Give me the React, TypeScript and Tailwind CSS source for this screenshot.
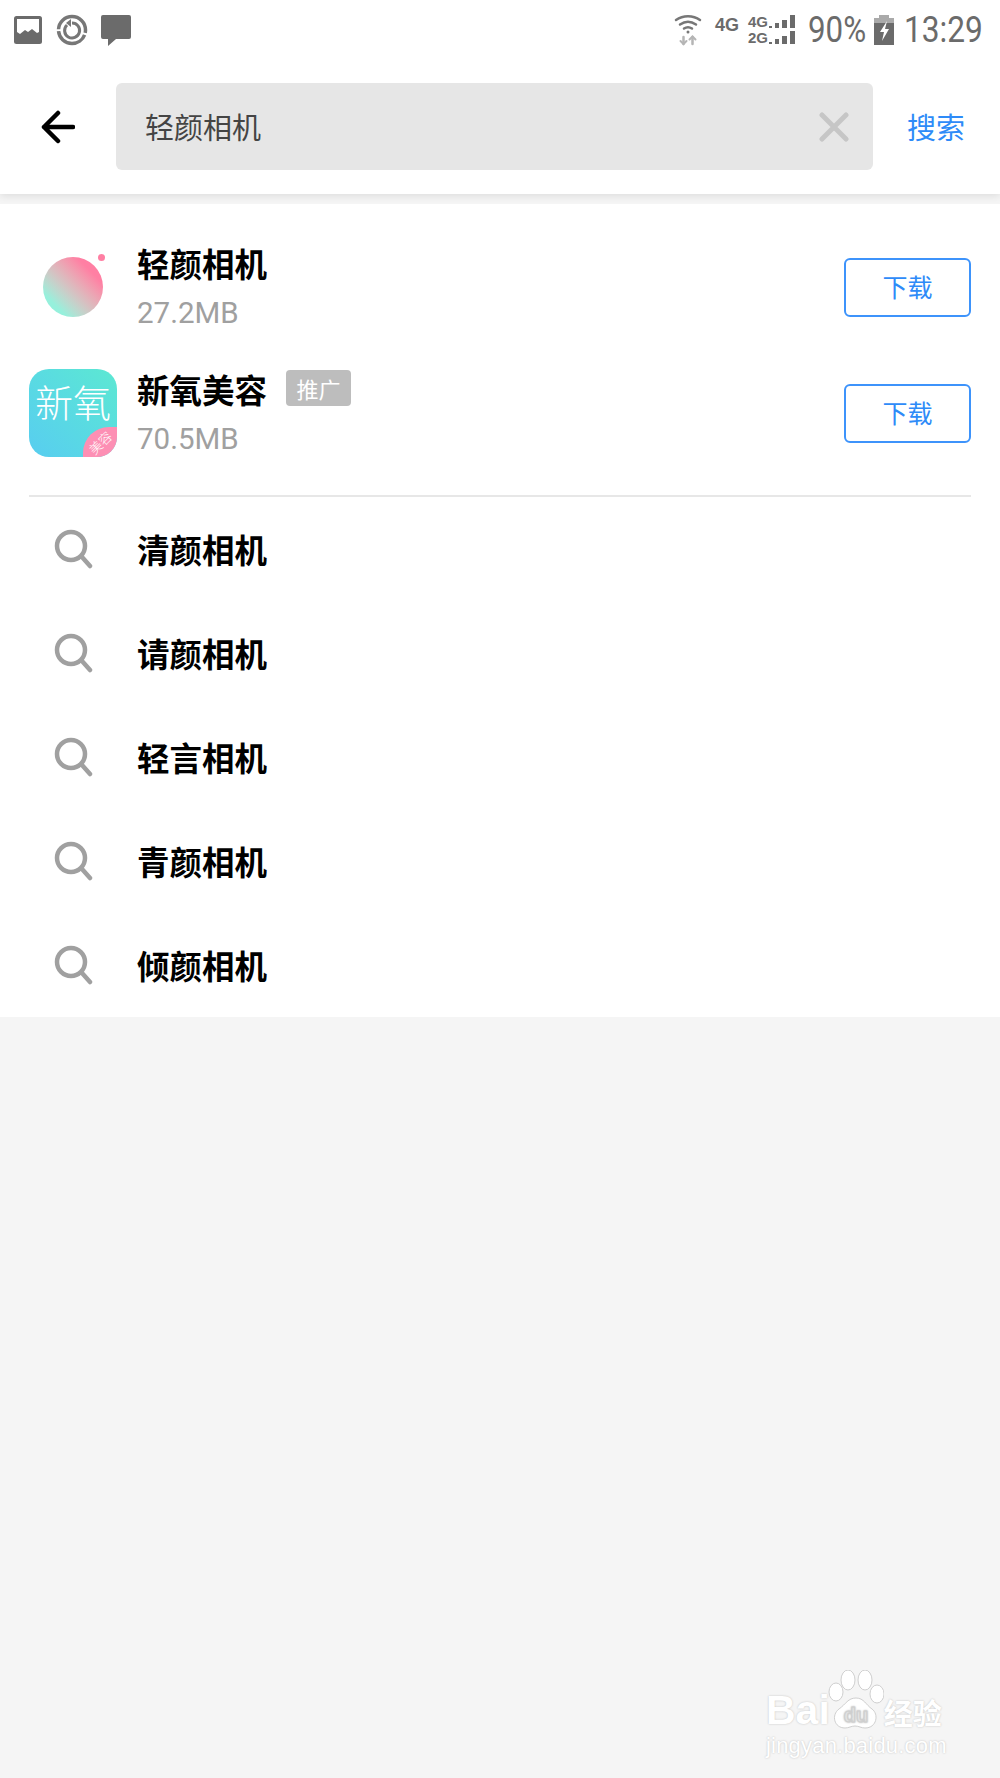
import { Fragment } from 'react'

const suggestions = ['清颜相机', '请颜相机', '轻言相机', '青颜相机', '倾颜相机']

const SearchIcon = () => (
  <svg width="40" height="40" viewBox="0 0 40 40" fill="none" stroke="#a0a0a0" strokeWidth="4.500" strokeLinecap="round">
    <circle cx="18" cy="17" r="14" />
    <path d="M29 28l8 9" />
  </svg>
)

const StatusLeft = () => (
  <div className="flex items-center">
    <svg width="28" height="28" viewBox="0 0 28 28" className="ml-[14px]">
      <rect width="28" height="28" rx="2.500" fill="#6b6b6b" />
      <path d="M3 3h22v13l-2 1-5-4-4 3-3-2-5 4-3-2z" fill="#fff" />
    </svg>
    <svg width="32" height="32" viewBox="0 0 32 32" fill="none" stroke="#777" className="ml-[14px]">
      <path d="M16 2.500a13.500 13.500 0 1 1-13.500 13.500 13.500 13.500 0 0 1 13.500-13.500" strokeWidth="3.500" strokeDasharray="24 2 36 2 30" />
      <path d="M11 11a7.500 7.500 0 1 0 5-2" strokeWidth="3" />
      <path d="M15 5v8l-5-4z" fill="#777" stroke="none" />
    </svg>
    <svg width="32" height="32" viewBox="0 0 32 32" className="ml-[12px]">
      <path d="M3 1h26a2 2 0 0 1 2 2v20a2 2 0 0 1-2 2H16l-8 7 0-7H3a2 2 0 0 1-2-2V3a2 2 0 0 1 2-2z" fill="#6b6b6b" />
    </svg>
  </div>
)

const SignalBars = () => (
  <svg width="26" height="13" viewBox="0 0 26 13" fill="#6b6b6b">
    <rect x="0" y="11" width="3" height="2" />
    <rect x="6" y="8" width="4" height="5" />
    <rect x="13" y="5" width="5" height="8" />
    <rect x="21" y="0" width="5" height="13" />
  </svg>
)

const StatusRight = () => (
  <div className="flex items-center text-[#6b6b6b] [font-family:'Roboto',sans-serif]">
    <svg width="28" height="32" viewBox="0 0 28 32" fill="none" stroke="#777" strokeWidth="2.500" strokeLinecap="round">
      <path d="M2 6c7-5 17-5 24 0" />
      <path d="M6 10.500c5-3.500 11-3.500 16 0" />
      <path d="M10 14.500c3-2 5-2 8 0" />
      <circle cx="14" cy="18" r="1.500" fill="#777" stroke="none" />
      <path d="M9.500 23v7M18.500 30v-7" stroke="#b5b5b5" />
      <path d="M6.500 27l3 3 3-3M15.500 25.500l3-3 3 3" stroke="#b5b5b5" strokeWidth="2" />
    </svg>
    <span className="ml-[13px] mb-[10px] w-[24px] text-[18px] font-bold leading-none [font-family:'Liberation_Sans',sans-serif]">4G</span>
    <div className="ml-[9px] flex flex-col gap-[3px]">
      <div className="flex items-end gap-[1px]">
        <span className="w-[20px] text-[15px] font-bold leading-[13px] [font-family:'Liberation_Sans',sans-serif]">4G</span>
        <SignalBars />
      </div>
      <div className="flex items-end gap-[1px]">
        <span className="w-[20px] text-[15px] font-bold leading-[13px] [font-family:'Liberation_Sans',sans-serif]">2G</span>
        <SignalBars />
      </div>
    </div>
    <span className="ml-[13px] inline-block w-[57px] origin-left scale-x-[0.87] text-[36px] leading-none whitespace-nowrap">90%</span>
    <svg width="20" height="30" viewBox="0 0 20 30" className="ml-[9px]">
      <rect x="5" y="0" width="10" height="3" fill="#aaa" />
      <rect x="0" y="3" width="20" height="7" fill="#aaa" />
      <rect x="0" y="8" width="20" height="22" fill="#6b6b6b" />
      <path d="M13 6l-7 11h4l-2 9 7-12h-4z" fill="#fff" />
    </svg>
    <span className="ml-[10px] mr-[16px] inline-block w-[80px] origin-left scale-x-[0.88] text-[36px] leading-none whitespace-nowrap">13:29</span>
  </div>
)

const DownloadButton = () => (
  <button className="flex h-[59px] w-[127px] items-center justify-center rounded-[6px] border-2 border-[#3d93fb] bg-white text-[25px] text-[#2e8bf8]">
    下载
  </button>
)

const QingyanIcon = () => (
  <div className="relative flex h-[88px] w-[88px] items-center justify-center">
    <div className="h-[60px] w-[60px] rounded-full bg-gradient-to-bl from-[#ff7fa3] from-[22%] to-[#96f0dc] to-[80%]" />
    <div className="absolute left-[69px] top-[11px] h-[7px] w-[7px] rounded-full bg-[#ff7fa3]" />
  </div>
)

const XinyangIcon = () => (
  <div className="relative flex h-[88px] w-[88px] items-start justify-center overflow-hidden rounded-[20px] bg-gradient-to-bl from-[#5ce8d2] to-[#58cdf0] pt-[7px]">
    <span className="text-[38px] font-light leading-[50px] text-white whitespace-nowrap">新氧</span>
    <div className="absolute bottom-0 right-0 flex h-[30px] w-[34px] items-center justify-center rounded-tl-[26px] bg-[#fd8fb4]">
      <span className="-rotate-45 text-[13px] font-light leading-none text-white whitespace-nowrap">美容</span>
    </div>
  </div>
)

const Watermark = () => (
  <div className="absolute left-[766px] top-[1670px] w-[182px] text-white [text-shadow:0_0_2px_#bdbdbd]">
    <div className="relative flex h-[62px] items-end">
      <span className="text-[41px] font-bold leading-[44px] [font-family:'Liberation_Sans',sans-serif]">Bai</span>
      <svg width="56" height="60" viewBox="0 0 56 60" fill="#fff" stroke="#cfcfcf" strokeWidth="1" className="absolute left-[62px] top-0">
        <ellipse cx="8" cy="22" rx="7" ry="9" />
        <ellipse cx="20" cy="10" rx="7" ry="10" />
        <ellipse cx="37" cy="10" rx="7" ry="10" />
        <ellipse cx="49" cy="24" rx="7" ry="9" />
        <path d="M28 28c8 0 10 7 16 11 7 5 5 19-7 19-4 0-6-2-10-2s-6 2-10 2C6 58 3 45 11 39c7-5 9-11 17-11z" />
        <text x="28" y="52" textAnchor="middle" fontSize="20" fontWeight="700" fill="#f5f5f5" stroke="#cfcfcf" fontFamily="Liberation Sans">du</text>
      </svg>
      <span className="ml-[54px] text-[29px] font-bold leading-[40px]">经验</span>
    </div>
    <div className="mt-[2px] text-[22px] leading-[24px] tracking-[0.2px] [font-family:'Liberation_Sans',sans-serif] whitespace-nowrap">jingyan.baidu.com</div>
  </div>
)

export default function App() {
  return (
    <div className="relative h-[1778px] w-full bg-[#f5f5f5] [font-family:'Noto_Sans_CJK_SC',sans-serif]">
      {/* top bars */}
      <div className="bg-white shadow-[0_2px_8px_rgba(0,0,0,0.1)]">
        <div className="flex h-[59px] items-center justify-between">
          <StatusLeft />
          <StatusRight />
        </div>
        <div className="flex h-[135px] items-center">
          <svg width="34" height="34" viewBox="0 0 34 34" fill="none" stroke="#000" strokeWidth="4.500" strokeLinecap="round" strokeLinejoin="round" className="ml-[41px]">
            <path d="M3 17h29M17 3L3 17l14 14" />
          </svg>
          <div className="ml-[41px] flex h-[87px] w-[757px] items-center justify-between rounded-[6px] bg-[#e6e6e6] pl-[29px] pr-[24px]">
            <span className="text-[29px] text-[#444]">轻颜相机</span>
            <svg width="30" height="30" viewBox="0 0 30 30" fill="none" stroke="#c6c6c6" strokeWidth="5" strokeLinecap="round">
              <path d="M3 3l24 24M27 3L3 27" />
            </svg>
          </div>
          <span className="ml-[34px] text-[29px] text-[#2e8bf8]">搜索</span>
        </div>
      </div>

      {/* results */}
      <div className="mt-[10px] bg-white pt-[20px]">
        <div className="mx-[29px] border-b-2 border-[#e7e7e7] pb-[19px]">
          {[
            { name: '轻颜相机', size: '27.2MB', icon: <QingyanIcon />, ad: false },
            { name: '新氧美容', size: '70.5MB', icon: <XinyangIcon />, ad: true },
          ].map((app) => (
            <div key={app.name} className="flex h-[126px] items-center">
              {app.icon}
              <div className="ml-[20px] flex-1">
                <div className="flex items-center">
                  <span className="text-[32.500px] font-bold leading-[46px] text-black">{app.name}</span>
                  {app.ad && (
                    <span className="ml-[19px] flex h-[36px] w-[65px] -translate-y-[1px] items-center justify-center rounded-[4px] bg-[#bdbdbd] text-[22px] text-white">推广</span>
                  )}
                </div>
                <div className="mt-[6px] text-[29.500px] leading-[42px] text-[#a0a0a0] [font-family:'Roboto',sans-serif]">{app.size}</div>
              </div>
              <DownloadButton />
            </div>
          ))}
        </div>
        {suggestions.map((text) => (
          <Fragment key={text}>
            <div className="flex h-[104px] items-center pl-[53px]">
              <SearchIcon />
              <span className="ml-[44px] text-[32.500px] font-bold text-black">{text}</span>
            </div>
          </Fragment>
        ))}
      </div>

      <Watermark />
    </div>
  )
}
